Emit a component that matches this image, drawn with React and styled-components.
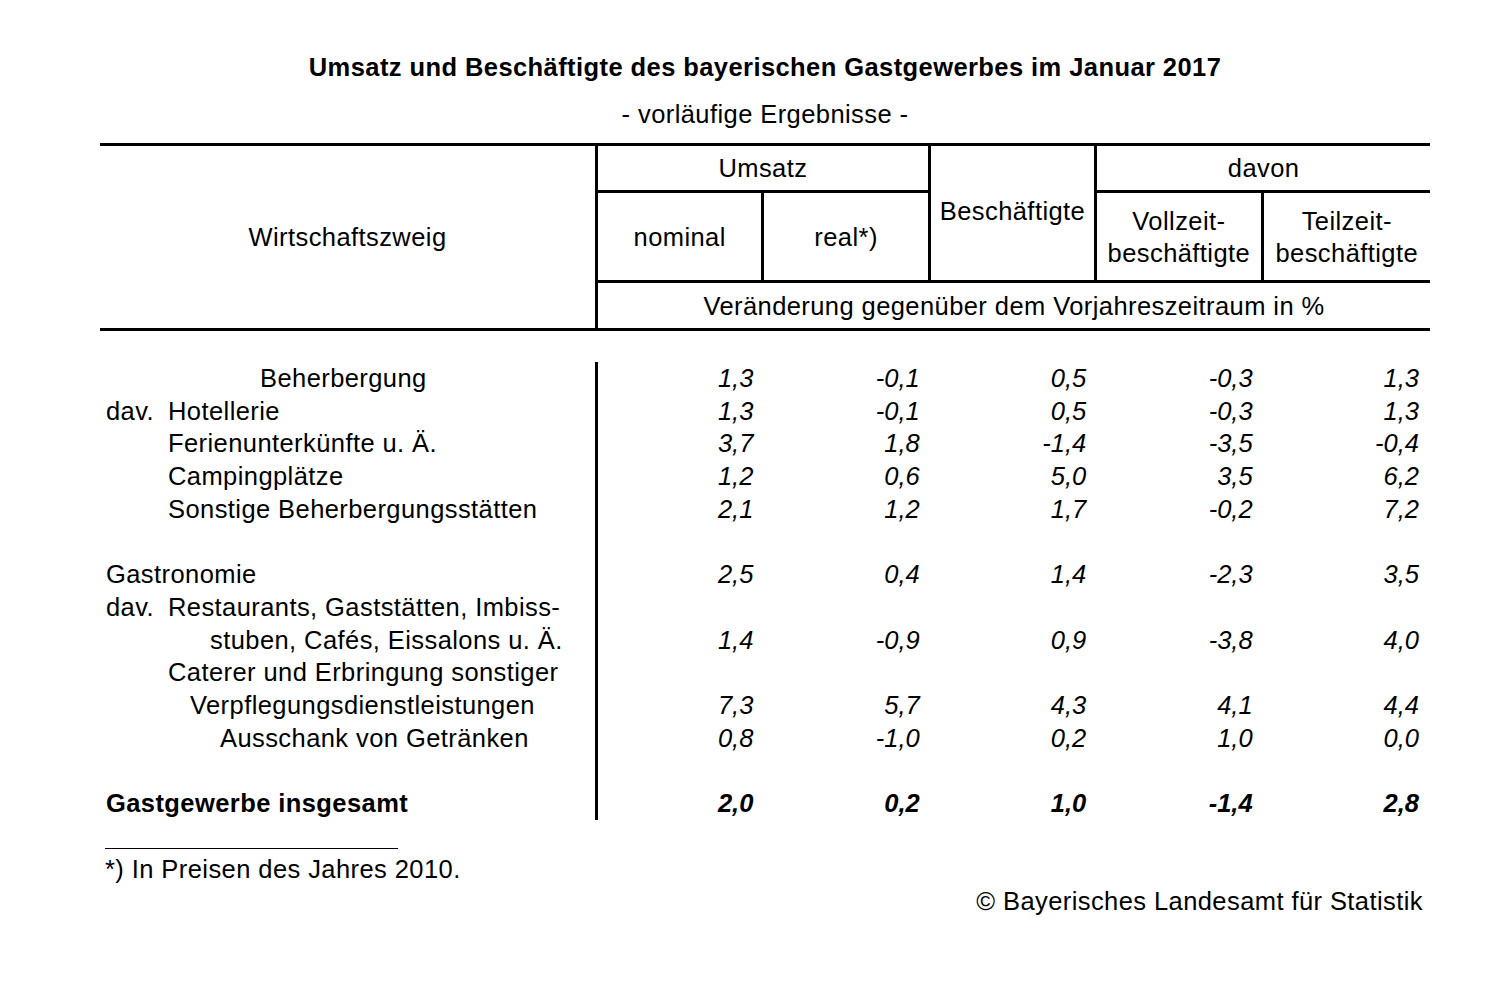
import React from 'react';
import styled, { createGlobalStyle } from 'styled-components';

const Global = createGlobalStyle`
  html, body { margin: 0; padding: 0; background: #fff; }
  body { font-family: "Liberation Sans", Arial, sans-serif; color: #000; }
`;

const Page = styled.div`
  width: 1493px;
  min-height: 994px;
  box-sizing: border-box;
  padding: 52px 0 0 100px;
`;

const Sheet = styled.div`
  width: 1330px;
  font-size: 25.5px;
  letter-spacing: 0.42px;
`;

const Title = styled.h1`
  margin: 0;
  font-size: 25.5px;
  font-weight: bold;
  line-height: 30px;
  text-align: center;
`;

const Subtitle = styled.div`
  margin-top: 17px;
  line-height: 30px;
  text-align: center;
`;

const Head = styled.div`
  margin-top: 14px;
  display: grid;
  grid-template-columns: 498px repeat(5, 1fr);
  grid-template-rows: 47px 87px 48px;
  border-top: 3px solid #000;
  border-bottom: 3px solid #000;
`;

const HCell = styled.div`
  box-sizing: border-box;
  display: flex;
  align-items: center;
  justify-content: center;
  text-align: center;
  line-height: 32px;
  grid-column: ${p => p.$col};
  grid-row: ${p => p.$row};
  border-right: ${p => (p.$right ? '3px solid #000' : 'none')};
  border-bottom: ${p => (p.$bottom ? '3px solid #000' : 'none')};
  border-top: ${p => (p.$top ? '3px solid #000' : 'none')};
  padding-bottom: ${p => p.$pb || 0}px;
`;

const Body = styled.div`
  margin-top: 31px;
`;

const Row = styled.div`
  display: grid;
  grid-template-columns: 498px repeat(5, 1fr);
  height: 32.7px;
  line-height: 32.7px;
  font-weight: ${p => (p.$bold ? 'bold' : 'normal')};
`;

const Label = styled.div`
  box-sizing: border-box;
  border-right: 3px solid #000;
  padding-left: ${p => p.$indent}px;
  white-space: nowrap;
`;

const Prefix = styled.span`
  display: inline-block;
  width: 62px;
`;

const Num = styled.div`
  text-align: right;
  padding-right: 11px;
  font-style: italic;
  letter-spacing: 0;
`;

const Foot = styled.div`
  margin-top: 28px;
  padding-left: 5px;
`;

const FootRule = styled.div`
  width: 293px;
  border-top: 1.5px solid #000;
`;

const FootNote = styled.div`
  line-height: 28px;
  margin-top: 6px;
`;

const Copyright = styled.div`
  text-align: right;
  padding-right: 7px;
  line-height: 28px;
  margin-top: 4px;
`;

const rows = [
  { indent: 160, label: 'Beherbergung', v: ['1,3', '-0,1', '0,5', '-0,3', '1,3'] },
  { indent: 6, prefix: 'dav.', label: 'Hotellerie', v: ['1,3', '-0,1', '0,5', '-0,3', '1,3'] },
  { indent: 68, label: 'Ferienunterkünfte u. Ä.', v: ['3,7', '1,8', '-1,4', '-3,5', '-0,4'] },
  { indent: 68, label: 'Campingplätze', v: ['1,2', '0,6', '5,0', '3,5', '6,2'] },
  { indent: 68, label: 'Sonstige Beherbergungsstätten', v: ['2,1', '1,2', '1,7', '-0,2', '7,2'] },
  { blank: true },
  { indent: 6, label: 'Gastronomie', v: ['2,5', '0,4', '1,4', '-2,3', '3,5'] },
  { indent: 6, prefix: 'dav.', label: 'Restaurants, Gaststätten, Imbiss-' },
  { indent: 110, label: 'stuben, Cafés, Eissalons u. Ä.', v: ['1,4', '-0,9', '0,9', '-3,8', '4,0'] },
  { indent: 68, label: 'Caterer und Erbringung sonstiger' },
  { indent: 90, label: 'Verpflegungsdienstleistungen', v: ['7,3', '5,7', '4,3', '4,1', '4,4'] },
  { indent: 120, label: 'Ausschank von Getränken', v: ['0,8', '-1,0', '0,2', '1,0', '0,0'] },
  { blank: true },
  { indent: 6, bold: true, label: 'Gastgewerbe insgesamt', v: ['2,0', '0,2', '1,0', '-1,4', '2,8'] },
];

export default function App() {
  return (
    <Page>
      <Global />
      <Sheet>
        <Title>Umsatz und Beschäftigte des bayerischen Gastgewerbes im Januar 2017</Title>
        <Subtitle>- vorläufige Ergebnisse -</Subtitle>
        <Head>
          <HCell $col="1" $row="1 / 4" $right>Wirtschaftszweig</HCell>
          <HCell $col="2 / 4" $row="1" $right $bottom>Umsatz</HCell>
          <HCell $col="4" $row="1 / 3" $right $pb={4}>Beschäftigte</HCell>
          <HCell $col="5 / 7" $row="1" $bottom>davon</HCell>
          <HCell $col="2" $row="2" $right>nominal</HCell>
          <HCell $col="3" $row="2" $right>real*)</HCell>
          <HCell $col="5" $row="2" $right>Vollzeit-<br />beschäftigte</HCell>
          <HCell $col="6" $row="2">Teilzeit-<br />beschäftigte</HCell>
          <HCell $col="2 / 7" $row="3" $top>Veränderung gegenüber dem Vorjahreszeitraum in %</HCell>
        </Head>
        <Body>
          {rows.map((r, i) => (
            <Row key={i} $bold={r.bold}>
              <Label $indent={r.indent || 0}>
                {r.prefix && <Prefix>{r.prefix}</Prefix>}
                {r.label}
              </Label>
              {[0, 1, 2, 3, 4].map(j => (
                <Num key={j}>{r.v ? r.v[j] : ''}</Num>
              ))}
            </Row>
          ))}
        </Body>
        <Foot>
          <FootRule />
          <FootNote>*) In Preisen des Jahres 2010.</FootNote>
        </Foot>
        <Copyright>© Bayerisches Landesamt für Statistik</Copyright>
      </Sheet>
    </Page>
  );
}
